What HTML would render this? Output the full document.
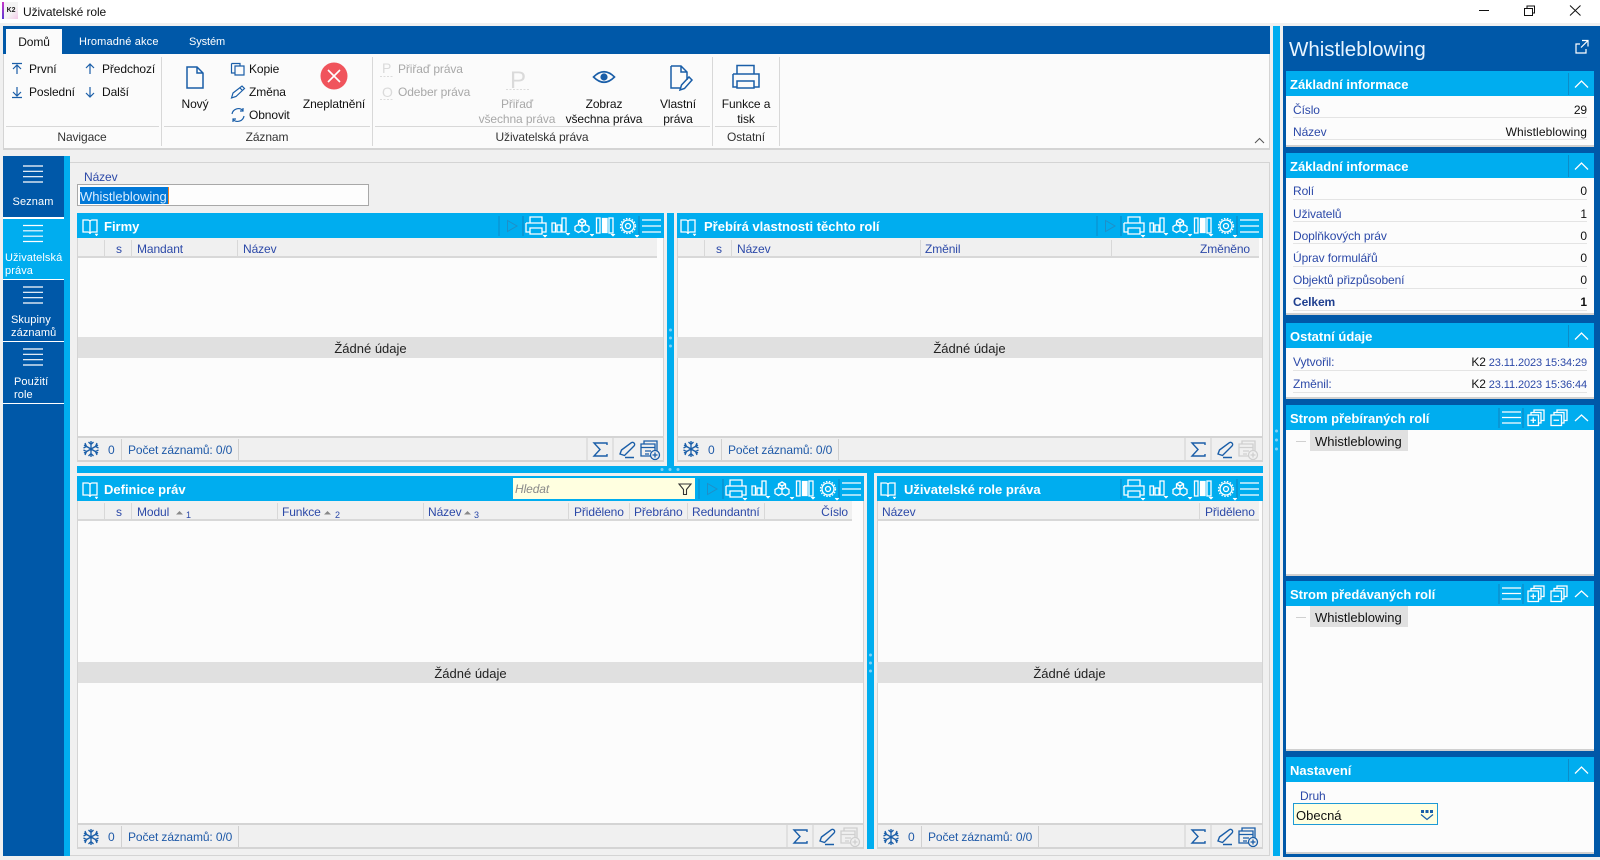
<!DOCTYPE html>
<html lang="cs"><head><meta charset="utf-8"><title>Uživatelské role</title>
<style>
html,body{margin:0;padding:0}
body{width:1600px;height:860px;position:relative;overflow:hidden;background:#f0f0f0;font:12px/16px "Liberation Sans",sans-serif;color:#111;letter-spacing:-.1px}
div,span.b{position:absolute}
.t{position:absolute;white-space:nowrap;line-height:16px}
.c{transform:translateX(-50%)}
.r{transform:translateX(-100%)}
.blue{background:#0058a8}
.sky{background:#00adef}
.w{color:#fff}
.l{color:#2c49a8}
.g{color:#a8a8a8}
.k{color:#1f5aa8;margin-top:1px}
.h{font-weight:bold;font-size:13px;color:#fff;margin-top:1px;letter-spacing:0}
.body{background:#fcfcfc;border-left:1px solid #d4d4d4;border-right:1px solid #d4d4d4;box-sizing:border-box}
.chd{background:#f0f0f0;border-bottom:2px solid #d8d8d8;box-sizing:border-box;height:20px}
.band{background:#e0e0e0;height:21px;line-height:23px;text-align:center;font-size:13px;color:#222;letter-spacing:0}
.ft{background:#f0f0f0;border:1px solid #d4d4d4;border-width:2px 1px;box-sizing:border-box;height:26px}
.sec{background:#fcfcfc;border-bottom:2px solid #d0d0d0;box-sizing:border-box;left:1286px;width:308px}
.rowl{left:1293px;width:294px;height:1px;background:#e4e4e4}
.n{font-size:11px;color:#fff;letter-spacing:.1px}
</style></head><body>

<!-- title bar -->
<div style="left:0;top:0;width:1600px;height:23px;background:#fff"></div>
<div style="left:2px;top:2px;width:16px;height:17px;background:linear-gradient(135deg,#f4f4f4 60%,#f4c8e8)"></div>
<div style="left:2px;top:2px;width:2px;height:17px;background:linear-gradient(#c838c8,#5a3ad0)"></div>
<div style="left:5px;top:6px;width:12px;height:10px;font:bold 7px/10px 'Liberation Sans',sans-serif;color:#222;text-align:center">K2</div>
<span class="t" style="left:23px;top:4px">Uživatelské role</span>

<!-- ribbon -->
<div class="blue" style="left:3px;top:26px;width:1267px;height:28px"></div>
<div style="left:6px;top:29px;width:56px;height:25px;background:#fbfbfb"></div>
<div style="left:3px;top:54px;width:1267px;height:96px;background:#fbfbfb;border:solid #d4d4d4;border-width:0 1px 2px 1px;box-sizing:border-box"></div>

<!-- left nav -->
<div class="blue" style="left:3px;top:156px;width:61px;height:700px"></div>
<div class="sky" style="left:64px;top:156px;width:6px;height:700px"></div>
<div style="left:3px;top:217px;width:61px;height:2px;background:#fff"></div>
<div class="sky" style="left:3px;top:219px;width:61px;height:60px"></div>
<div style="left:3px;top:279px;width:61px;height:1px;background:#fff"></div>
<div style="left:3px;top:341px;width:61px;height:1px;background:#fff"></div>
<div style="left:3px;top:403px;width:61px;height:1px;background:#fff"></div>

<!-- content box -->
<div style="left:70px;top:162px;width:1200px;height:694px;background:#f0f0f0;border:solid #d4d4d4;border-width:1px 1px 1px 0;box-sizing:border-box"></div>
<div style="left:77px;top:184px;width:292px;height:22px;background:#fdfdfd;border:1px solid #a8a8a8;box-sizing:border-box"></div>
<div style="left:80px;top:187px;width:88px;height:17px;background:#0078d7"></div>
<div style="left:168px;top:187px;width:1px;height:17px;background:#f08020"></div>

<!-- panel 1 -->
<div class="sky" style="left:77px;top:213px;width:587px;height:25px"></div>
<div class="body" style="left:77px;top:238px;width:587px;height:224px"></div>
<div class="chd" style="left:78px;top:238px;width:579px"></div>
<div class="band" style="left:78px;top:337px;width:585px">Žádné údaje</div>
<div class="ft" style="left:77px;top:436px;width:587px"></div>

<!-- panel 2 -->
<div class="sky" style="left:677px;top:213px;width:586px;height:25px"></div>
<div class="body" style="left:677px;top:238px;width:586px;height:224px"></div>
<div class="chd" style="left:678px;top:238px;width:581px"></div>
<div class="band" style="left:677px;top:337px;width:585px">Žádné údaje</div>
<div class="ft" style="left:677px;top:436px;width:586px"></div>

<!-- panel 3 -->
<div class="sky" style="left:77px;top:476px;width:787px;height:25px"></div>
<div class="body" style="left:77px;top:501px;width:787px;height:348px"></div>
<div class="chd" style="left:78px;top:501px;width:774px"></div>
<div class="band" style="left:78px;top:662px;width:785px">Žádné údaje</div>
<div class="ft" style="left:77px;top:823px;width:787px"></div>
<div style="left:513px;top:478px;width:182px;height:21px;background:#ffffe0"></div>

<!-- panel 4 -->
<div class="sky" style="left:877px;top:476px;width:386px;height:25px"></div>
<div class="body" style="left:877px;top:501px;width:386px;height:348px"></div>
<div class="chd" style="left:878px;top:501px;width:381px"></div>
<div class="band" style="left:877px;top:662px;width:385px">Žádné údaje</div>
<div class="ft" style="left:877px;top:823px;width:386px"></div>

<!-- splitters -->
<div class="sky" style="left:667px;top:213px;width:7px;height:253px"></div>
<div class="sky" style="left:867px;top:473px;width:7px;height:376px"></div>
<div class="sky" style="left:77px;top:466px;width:1186px;height:7px"></div>
<div class="sky" style="left:1273px;top:26px;width:7px;height:830px"></div>

<!-- right panel -->
<div class="blue" style="left:1283px;top:26px;width:317px;height:831px"></div>
<div class="sky" style="left:1286px;top:71px;width:308px;height:25px"></div>
<div class="sec" style="top:96px;height:51px"></div>
<div class="sky" style="left:1286px;top:153px;width:308px;height:25px"></div>
<div class="sec" style="top:178px;height:137px"></div>
<div class="sky" style="left:1286px;top:323px;width:308px;height:25px"></div>
<div class="sec" style="top:348px;height:51px"></div>
<div class="sky" style="left:1286px;top:405px;width:308px;height:25px"></div>
<div class="sec" style="top:430px;height:146px"></div>
<div class="sky" style="left:1286px;top:581px;width:308px;height:25px"></div>
<div class="sec" style="top:606px;height:145px"></div>
<div class="sky" style="left:1286px;top:757px;width:308px;height:25px"></div>
<div class="sec" style="top:782px;height:72px"></div>
<div class="rowl" style="top:117px"></div><div class="rowl" style="top:139px"></div>
<div class="rowl" style="top:199px"></div><div class="rowl" style="top:221px"></div><div class="rowl" style="top:243px"></div><div class="rowl" style="top:266px"></div><div class="rowl" style="top:288px"></div><div class="rowl" style="top:310px"></div>
<div class="rowl" style="top:370px"></div><div class="rowl" style="top:392px"></div>
<div style="left:1310px;top:430px;width:98px;height:21px;background:#e0e0e0"></div>
<div style="left:1310px;top:606px;width:98px;height:21px;background:#e0e0e0"></div>
<div style="left:1293px;top:803px;width:145px;height:22px;background:#ffffe0;border:1px solid #1e9ad6;box-sizing:border-box"></div>

<!-- icons and lines -->
<svg width="1600" height="860" viewBox="0 0 1600 860" style="position:absolute;left:0;top:0;overflow:visible" fill="none">
<defs>
<g id="tools" stroke="#fff" stroke-width="1.3">
  <path d="M-1 3V23M115 3V23" stroke="#0c8cc8"/>
  <path d="M6 10V4H18V10M2 10H22V19H18M6 19H2V10M6 15H18V21H6Z"/>
  <path d="M28 10h3.500v9h-3.500zM33 12h4v7h-4zM38 5h4v14h-4z"/>
  <path d="M58 6l3.500 2v3.500l-3.500 2-3.500-2V8zM54.500 11.500l3.500 2v4l-3.500 2-3.500-2v-4zM61.500 11.500l3.500 2v4l-3.500 2-3.500-2v-4zM54.500 8l3.500 2 3.500-2M58 10v3.500"/>
  <path d="M72.500 5h3.500v15h-3.500zM85 5h4v15h-4z"/>
  <path d="M78.500 5.500h4.500v14h-4.500z" fill="#fff"/>
  <circle cx="104" cy="13" r="2.500"/><circle cx="104" cy="13" r="6"/><circle cx="104" cy="13" r="7.500" stroke-dasharray="1.500 1.500"/>
  <path d="M118 7H137M118 13H137M118 19H137"/>
  <path d="M19 22l2 2 2-2M42 20l2 2 2-2M66 21l2 2 2-2M87 21l2 2 2-2M111 22l2 2 2-2" fill="#fff" stroke-width=".8"/>
</g>
<g id="book" stroke="#fff" stroke-width="1.3">
  <path d="M1 2H6a2 2 0 0 1 2 2V16a2 2 0 0 0-2-2H1ZM15 2H10a2 2 0 0 0-2 2V16a2 2 0 0 1 2-2H15Z"/>
  <path d="M13 16l1.500 2 1.500-2z" fill="#fff" stroke-width=".5"/>
</g>
<g id="flake" stroke="#1a5ea8" stroke-width="1.300">
  <path d="M0-8V8M-7-4L7 4M-7 4L7-4M-2.500-7L0-4.500 2.500-7M-2.500 7L0 4.500 2.500 7M-7.500-1L-4.500-2.500-6-6M7.500-1L4.500-2.500 6-6M-7.500 1L-4.500 2.500-6 6M7.500 1L4.500 2.500 6 6"/>
</g>
<g id="fr" stroke="#1a5ea8" stroke-width="1.400">
  <path d="M0 2V24M26 2V24" stroke="#d0d0d0" stroke-width="1"/>
  <path d="M20 9V7H7L13 13.500 7 20H20V18"/>
  <path d="M33 18l1.500-4L44 7a1.600 1.600 0 0 1 3 3L37.500 19.500ZM38 21.500H47"/>
</g>
<g id="tbl" stroke="currentColor" stroke-width="1.300">
  <path d="M57 8V5H70V15M54 8H68V20H54ZM54 11.500H68M58 15H64M58 18H62"/>
  <circle cx="68" cy="19" r="4.500" fill="#f0f0f0"/><path d="M65.500 19H70.500M68 16.500V21.500"/>
</g>
<g id="ham"><path d="M0 0H20M0 5.300H20M0 10.700H20M0 16H20" stroke="#fff" stroke-width="1.200"/></g>
<g id="chev"><path d="M-6.500 3.500L0-3 6.500 3.500" stroke="#fff" stroke-width="1.300"/><path d="M-13-11V11" stroke="#0c8cc8"/></g>
<g id="stree" stroke="#fff" stroke-width="1.300">
  <path d="M1499 3V23M1523 3V23" stroke="#0c8cc8"/>
  <path d="M1502 7H1521M1502 12.500H1521M1502 18H1521"/>
  <path d="M1528 10H1538.500V20.500H1528ZM1531 10V7.500H1541V18H1538.500M1534 7.500V5H1544V15.500H1541"/>
  <path d="M1551 10H1561.500V20.500H1551ZM1554 10V7.500H1564V18H1561.500M1557 7.500V5H1567V15.500H1564"/>
  <path d="M1533.250 12.500V18M1530.500 15.250H1536M1553.500 15.250H1559"/>
  <path d="M1575 16L1581.500 10 1588 16"/>
</g>
</defs>

<!-- window controls -->
<path d="M1479 10.500H1489" stroke="#111" stroke-width="1"/>
<path d="M1524.500 8.500H1532.500V15.500H1524.500ZM1527 8.500V6H1534.500V13H1532.500" stroke="#111" stroke-width="1"/>
<path d="M1570 5.500L1580.500 15.500M1580.500 5.500L1570 15.500" stroke="#111" stroke-width="1"/>

<!-- ribbon separators -->
<path d="M161.500 57V146M372.500 57V146M712.500 57V146M779.500 57V146" stroke="#d8d8d8"/>
<path d="M6 126.500H159M164 126.500H370M375 126.500H710M715 126.500H777" stroke="#d8d8d8"/>
<path d="M1255 143L1259.500 138.500 1264 143" stroke="#555" stroke-width="1"/>

<!-- ribbon icons -->
<g stroke="#1a5ea8" stroke-width="1.200">
  <path d="M12 63.500H22M17 65V74M13 69L17 65 21 69"/>
  <path d="M12 97.500H22M17 87V96M13 92L17 96 21 92"/>
  <path d="M90 64V74M86 68L90 64 94 68"/>
  <path d="M90 87V97M86 93L90 97 94 93"/>
  <path d="M187 67H197L203 73V88H187ZM197 67V73H203" stroke-width="1.500"/>
  <path d="M235 66H244V75H235ZM231.500 63.500H240V66M231.500 63.500V73H235"/>
  <path d="M231.500 98L233 93 242 86 244.500 88.500 236 96.500ZM240 88L242.500 90.500"/>
  <path d="M232 114a6.500 6.500 0 0 1 11-3.500M243 108V111H240M244 116a6.500 6.500 0 0 1-11 3.500M233 122V119H236"/>
  <path d="M593.500 77Q604 66.500 614.500 77 604 87.500 593.500 77Z" stroke-width="1.600"/>
  <circle cx="604" cy="77" r="3" fill="#1a5ea8"/>
  <path d="M671 66H681L687 72V80M681 66V72H687M671 66V88H680" stroke-width="1.500"/>
  <path d="M680 90L681.500 85 689 77 692 80 684.500 88.500Z" stroke-width="1.500"/>
  <path d="M737 74V65.500H754V74M733 74H759V87H754M737 87H733V74M737 81H754V88H737Z" stroke-width="1.500"/>
</g>
<circle cx="334" cy="76" r="13.500" fill="#f0545c"/>
<path d="M328 70L340 82M340 70L328 82" stroke="#fff" stroke-width="1.600"/>
<path d="M380 76.500H394M380 99.500H394M506 89.500H530" stroke="#dcdcdc" stroke-dasharray="2 1.500"/>

<!-- nav hamburgers -->
<use href="#ham" x="23" y="166"/><use href="#ham" x="23" y="225.500"/><use href="#ham" x="23" y="287"/><use href="#ham" x="23" y="349"/>

<!-- panel headers -->
<use href="#book" x="82" y="218"/><use href="#book" x="680" y="218"/><use href="#book" x="82" y="481"/><use href="#book" x="880" y="481"/>
<use href="#tools" x="524" y="213"/><use href="#tools" x="1122" y="213"/><use href="#tools" x="724" y="476"/><use href="#tools" x="1122" y="476"/>
<path d="M499 216V236M1097 216V236M699 479V499" stroke="#0c8cc8"/>
<path d="M507.500 220.500L517 226 507.500 231.500ZM1105.500 220.500L1115 226 1105.500 231.500ZM707.500 483.500L717 489 707.500 494.500Z" stroke="#1e8fc8"/>
<path d="M679 484H691L686.500 489.500V494.500H683.500V489.500Z" stroke="#333" stroke-width="1.100"/>

<!-- column lines -->
<path d="M104.500 240V256M131.500 240V256M237.500 240V256M704.500 240V256M731.500 240V256M920.500 240V256M1111.500 240V256
M104.500 503V519M131.500 503V519M277.500 503V519M423.500 503V519M568.500 503V519M629.500 503V519M687.500 503V519M764.500 503V519M1199.500 503V519" stroke="#d8d8d8"/>
<path d="M176 514.500L179.500 511 183 514.500ZM324 514.500L327.500 511 331 514.500ZM464 514.500L467.500 511 471 514.500Z" fill="#888"/>

<!-- footers -->
<use href="#flake" x="91" y="449"/><use href="#flake" x="691" y="449"/><use href="#flake" x="91" y="837"/><use href="#flake" x="891" y="837"/>
<path d="M121.500 439V460M238.500 439V460M721.500 439V460M838.500 439V460M121.500 826V847M238.500 826V847M921.500 826V847M1038.500 826V847" stroke="#d0d0d0"/>
<use href="#fr" x="587" y="436"/><use href="#fr" x="1185" y="436"/><use href="#fr" x="787" y="823"/><use href="#fr" x="1185" y="823"/>
<use href="#tbl" x="587" y="436" style="color:#1a5ea8"/><use href="#tbl" x="1185" y="436" style="color:#cfcfcf"/><use href="#tbl" x="787" y="823" style="color:#cfcfcf"/><use href="#tbl" x="1185" y="823" style="color:#1a5ea8"/>

<!-- splitter dots -->
<g fill="#7fd0f5">
  <circle cx="670.500" cy="330" r="1.500"/><circle cx="670.500" cy="338" r="1.500"/><circle cx="670.500" cy="346" r="1.500"/>
  <circle cx="870.500" cy="655" r="1.500"/><circle cx="870.500" cy="663" r="1.500"/><circle cx="870.500" cy="671" r="1.500"/>
  <circle cx="662" cy="469.500" r="1.500"/><circle cx="670" cy="469.500" r="1.500"/><circle cx="678" cy="469.500" r="1.500"/>
  <circle cx="1276.500" cy="431" r="1.500"/><circle cx="1276.500" cy="440" r="1.500"/><circle cx="1276.500" cy="449" r="1.500"/>
</g>

<!-- right panel icons -->
<path d="M1580 44H1576V53H1586V49M1582 40.500H1588V46.500M1588 40.500L1581 47.500" stroke="#fff" stroke-width="1.200"/>
<use href="#chev" x="1581.500" y="84"/><use href="#chev" x="1581.500" y="166"/><use href="#chev" x="1581.500" y="336"/><use href="#chev" x="1581.500" y="770"/>
<use href="#stree" x="0" y="405"/><use href="#stree" x="0" y="581"/>
<path d="M1296 441.500H1306M1296 617.500H1306" stroke="#d0d0d0"/>
<path d="M1421 814.500L1427 819.500 1433 814.500" stroke="#1a5ea8" stroke-width="1.200"/>
<path d="M1421 811.500H1433" stroke="#1a5ea8" stroke-width="3" stroke-dasharray="3 1.500"/>
</svg>

<!-- ribbon text -->
<span class="t c" style="left:34px;top:34px;font-size:12px">Domů</span>
<span class="t w" style="left:79px;top:34px;font-size:11px;letter-spacing:.15px">Hromadné akce</span>
<span class="t w" style="left:189px;top:34px;font-size:11px">Systém</span>
<span class="t" style="left:29px;top:61px">První</span>
<span class="t" style="left:29px;top:84px">Poslední</span>
<span class="t" style="left:102px;top:61px">Předchozí</span>
<span class="t" style="left:102px;top:84px">Další</span>
<span class="t c" style="left:195px;top:96px">Nový</span>
<span class="t" style="left:249px;top:61px">Kopie</span>
<span class="t" style="left:249px;top:84px">Změna</span>
<span class="t" style="left:249px;top:107px">Obnovit</span>
<span class="t c" style="left:334px;top:96px">Zneplatnění</span>
<span class="t" style="left:382px;top:60px;font-size:14px;color:#dadada">P</span>
<span class="t" style="left:382px;top:84px;font-size:14px;color:#dadada">O</span>
<span class="t g" style="left:398px;top:61px">Přiřaď práva</span>
<span class="t g" style="left:398px;top:84px">Odeber práva</span>
<span class="t c" style="left:518px;top:69px;font-size:24px;line-height:24px;color:#dadada">P</span>
<span class="t c g" style="left:517px;top:96px">Přiřaď</span>
<span class="t c g" style="left:517px;top:111px">všechna práva</span>
<span class="t c" style="left:604px;top:96px">Zobraz</span>
<span class="t c" style="left:604px;top:111px">všechna práva</span>
<span class="t c" style="left:678px;top:96px">Vlastní</span>
<span class="t c" style="left:678px;top:111px">práva</span>
<span class="t c" style="left:746px;top:96px">Funkce a</span>
<span class="t c" style="left:746px;top:111px">tisk</span>
<span class="t c" style="left:82px;top:129px;color:#333">Navigace</span>
<span class="t c" style="left:267px;top:129px;color:#333">Záznam</span>
<span class="t c" style="left:542px;top:129px;color:#333">Uživatelská práva</span>
<span class="t c" style="left:746px;top:129px;color:#333">Ostatní</span>

<!-- nav text -->
<span class="t n c" style="left:33px;top:194px">Seznam</span>
<span class="t n" style="left:5px;top:250px">Uživatelská</span>
<span class="t n" style="left:5px;top:263px">práva</span>
<span class="t n" style="left:11px;top:312px">Skupiny</span>
<span class="t n" style="left:11px;top:325px">záznamů</span>
<span class="t n" style="left:14px;top:374px">Použití</span>
<span class="t n" style="left:14px;top:387px">role</span>

<span class="t l" style="left:84px;top:169px">Název</span>
<span class="t" style="left:80px;top:189px;font-size:13px;color:#d8ecff;letter-spacing:0">Whistleblowing</span>

<!-- panel titles -->
<span class="t h" style="left:104px;top:218px">Firmy</span>
<span class="t h" style="left:704px;top:218px">Přebírá vlastnosti těchto rolí</span>
<span class="t h" style="left:104px;top:481px">Definice práv</span>
<span class="t h" style="left:904px;top:481px">Uživatelské role práva</span>

<!-- col headers -->
<span class="t l" style="left:116px;top:241px">s</span>
<span class="t l" style="left:137px;top:241px">Mandant</span>
<span class="t l" style="left:243px;top:241px">Název</span>
<span class="t l" style="left:716px;top:241px">s</span>
<span class="t l" style="left:737px;top:241px">Název</span>
<span class="t l" style="left:925px;top:241px">Změnil</span>
<span class="t l r" style="left:1250px;top:241px">Změněno</span>
<span class="t l" style="left:116px;top:504px">s</span>
<span class="t l" style="left:137px;top:504px">Modul</span>
<span class="t l" style="left:186px;top:507px;font-size:9px">1</span>
<span class="t l" style="left:282px;top:504px">Funkce</span>
<span class="t l" style="left:335px;top:507px;font-size:9px">2</span>
<span class="t l" style="left:428px;top:504px">Název</span>
<span class="t l" style="left:474px;top:507px;font-size:9px">3</span>
<span class="t l" style="left:574px;top:504px">Přiděleno</span>
<span class="t l" style="left:634px;top:504px">Přebráno</span>
<span class="t l" style="left:692px;top:504px">Redundantní</span>
<span class="t l r" style="left:848px;top:504px">Číslo</span>
<span class="t l" style="left:882px;top:504px">Název</span>
<span class="t l" style="left:1205px;top:504px">Přiděleno</span>
<span class="t" style="left:515px;top:481px;font-style:italic;color:#8a8a8a">Hledat</span>

<!-- footer text -->
<span class="t k" style="left:108px;top:441px">0</span><span class="t k" style="left:128px;top:441px">Počet záznamů: 0/0</span>
<span class="t k" style="left:708px;top:441px">0</span><span class="t k" style="left:728px;top:441px">Počet záznamů: 0/0</span>
<span class="t k" style="left:108px;top:828px">0</span><span class="t k" style="left:128px;top:828px">Počet záznamů: 0/0</span>
<span class="t k" style="left:908px;top:828px">0</span><span class="t k" style="left:928px;top:828px">Počet záznamů: 0/0</span>

<!-- right panel text -->
<span class="t" style="left:1289px;top:38px;font-size:20.500px;line-height:24px;color:#e8f4ff;letter-spacing:0">Whistleblowing</span>
<span class="t h" style="left:1290px;top:76px">Základní informace</span>
<span class="t l" style="left:1293px;top:102px">Číslo</span><span class="t r" style="left:1587px;top:102px">29</span>
<span class="t l" style="left:1293px;top:124px">Název</span><span class="t r" style="left:1587px;top:124px;letter-spacing:.1px">Whistleblowing</span>
<span class="t h" style="left:1290px;top:158px">Základní informace</span>
<span class="t l" style="left:1293px;top:183px">Rolí</span><span class="t r" style="left:1587px;top:183px">0</span>
<span class="t l" style="left:1293px;top:206px">Uživatelů</span><span class="t r" style="left:1587px;top:206px">1</span>
<span class="t l" style="left:1293px;top:228px">Doplňkových práv</span><span class="t r" style="left:1587px;top:228px">0</span>
<span class="t l" style="left:1293px;top:250px">Úprav formulářů</span><span class="t r" style="left:1587px;top:250px">0</span>
<span class="t l" style="left:1293px;top:272px">Objektů přizpůsobení</span><span class="t r" style="left:1587px;top:272px">0</span>
<span class="t" style="left:1293px;top:294px;font-weight:bold;color:#1f3f8f">Celkem</span><span class="t r" style="left:1587px;top:294px;font-weight:bold">1</span>
<span class="t h" style="left:1290px;top:328px">Ostatní údaje</span>
<span class="t l" style="left:1293px;top:354px">Vytvořil:</span><span class="t r" style="left:1587px;top:354px;font-size:11px"><span style="color:#111;font-size:12px">K2</span> <span class="l">23.11.2023 15:34:29</span></span>
<span class="t l" style="left:1293px;top:376px">Změnil:</span><span class="t r" style="left:1587px;top:376px;font-size:11px"><span style="color:#111;font-size:12px">K2</span> <span class="l">23.11.2023 15:36:44</span></span>
<span class="t h" style="left:1290px;top:410px">Strom přebíraných rolí</span>
<span class="t" style="left:1315px;top:434px;font-size:13px;letter-spacing:0">Whistleblowing</span>
<span class="t h" style="left:1290px;top:586px">Strom předávaných rolí</span>
<span class="t" style="left:1315px;top:610px;font-size:13px;letter-spacing:0">Whistleblowing</span>
<span class="t h" style="left:1290px;top:762px">Nastavení</span>
<span class="t l" style="left:1300px;top:788px">Druh</span>
<span class="t" style="left:1296px;top:808px;font-size:13px;letter-spacing:0">Obecná</span>
</body></html>
